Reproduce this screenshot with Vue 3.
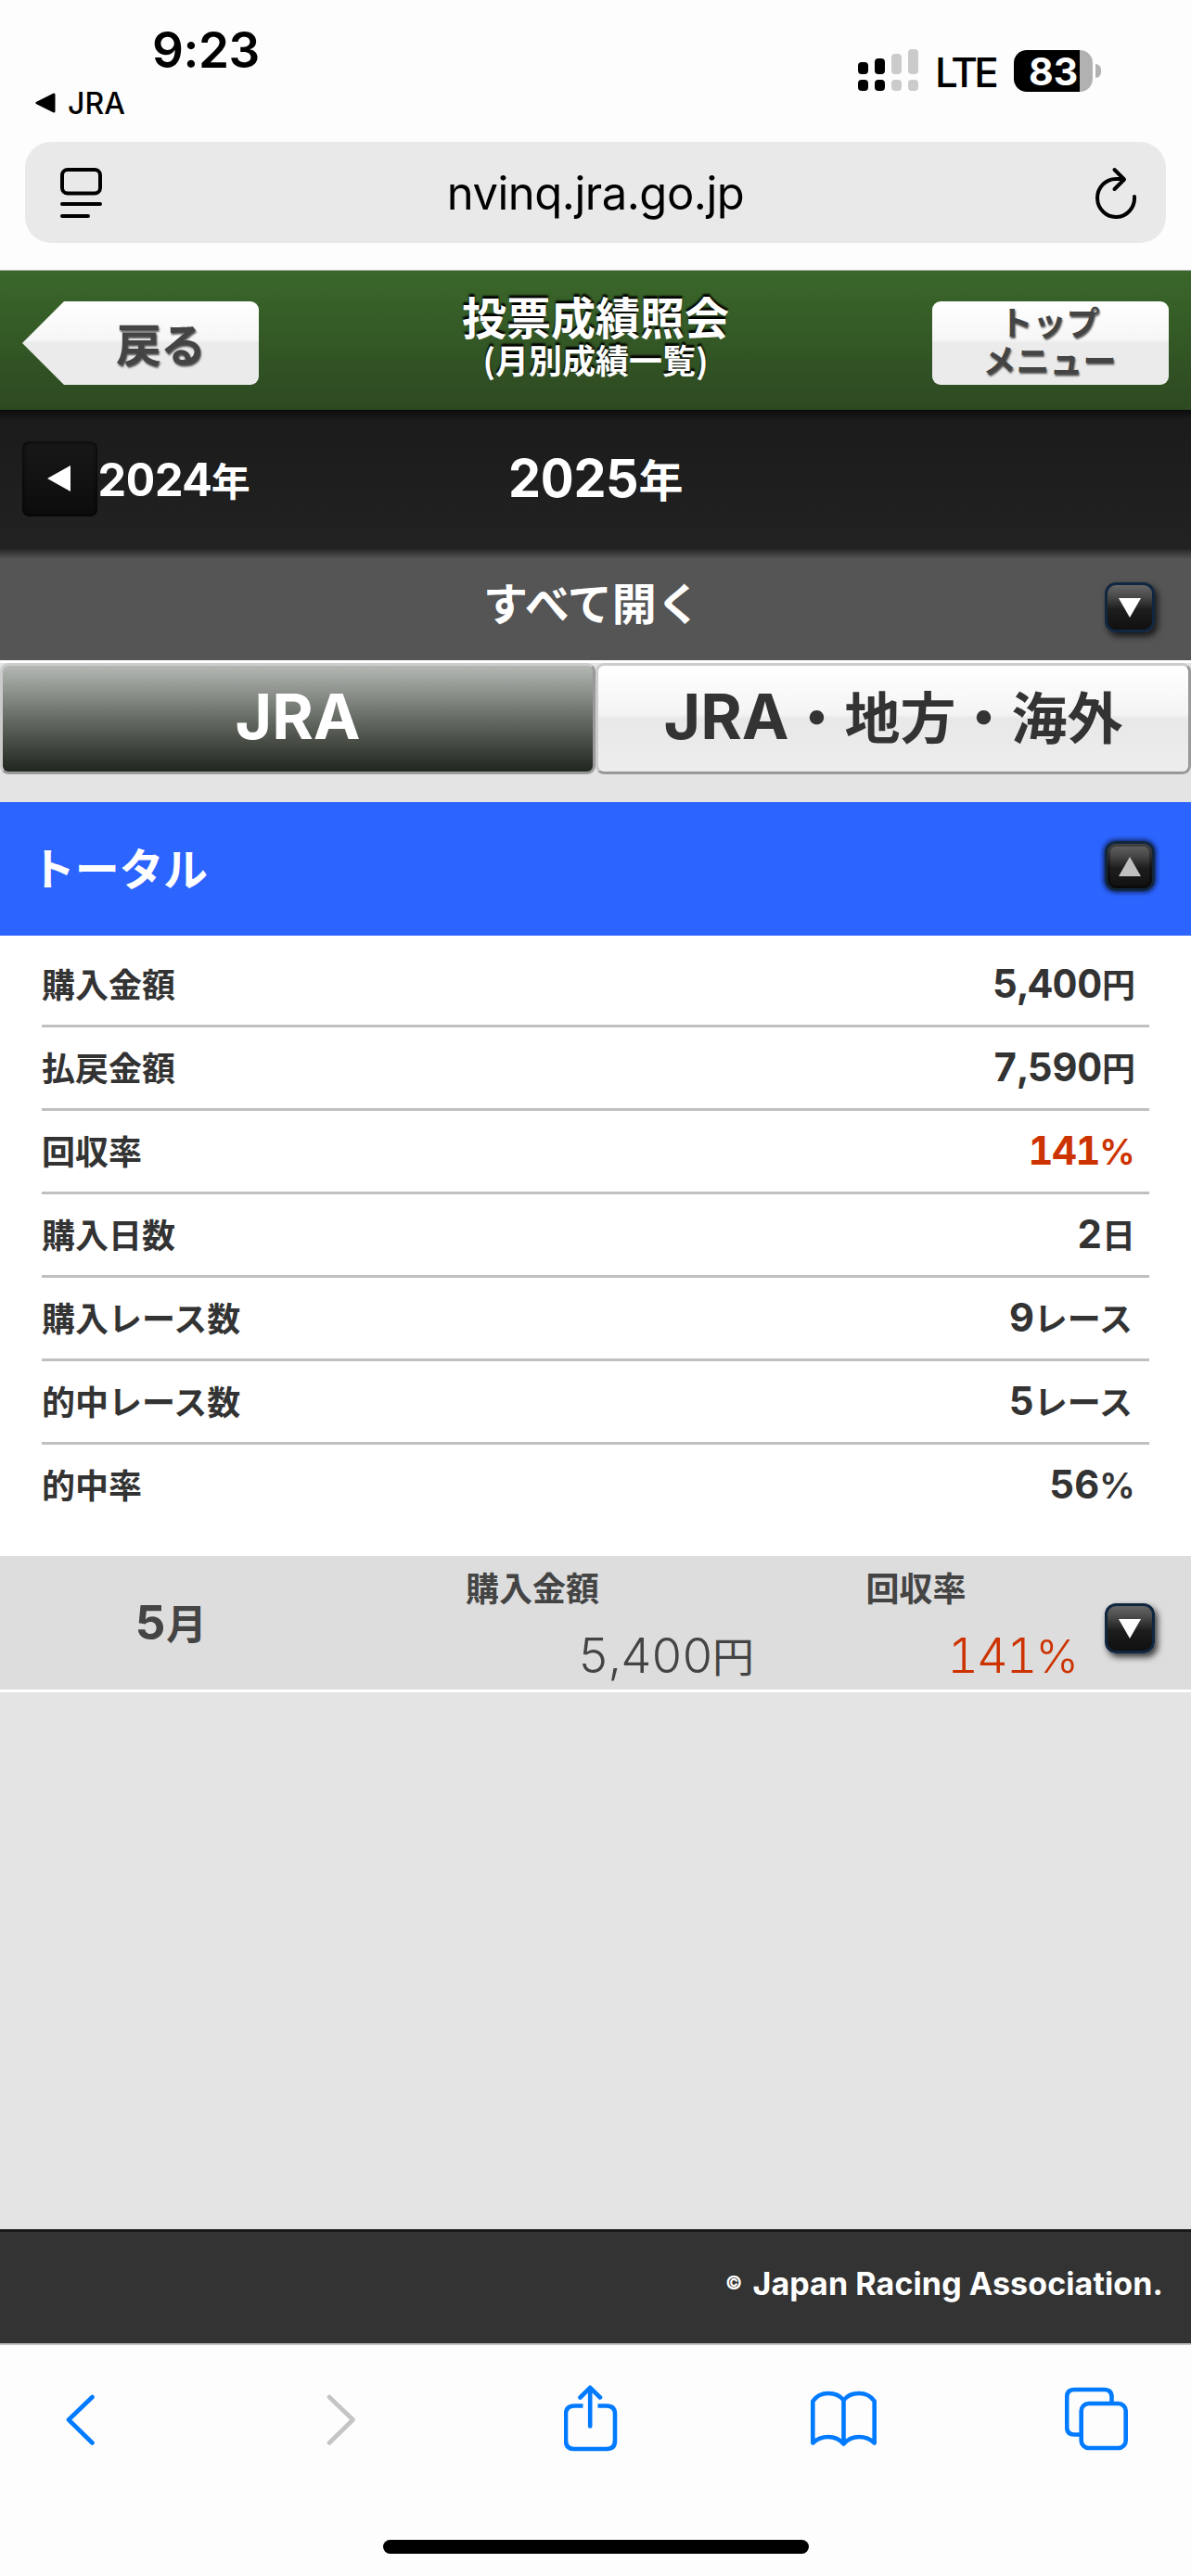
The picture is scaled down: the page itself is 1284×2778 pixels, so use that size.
<script setup>
const rows = [
  { label: '購入金額', num: '5,400', unit: '円' },
  { label: '払戻金額', num: '7,590', unit: '円' },
  { label: '回収率', num: '141', pct: true, red: true },
  { label: '購入日数', num: '2', unit: '日' },
  { label: '購入レース数', num: '9', unit: 'レース', kana: true },
  { label: '的中レース数', num: '5', unit: 'レース', kana: true },
  { label: '的中率', num: '56', pct: true },
]
</script>

<template>
  <div class="screen">
    <header class="browser-top">
      <div class="status">
        <div class="status-left">
          <div class="time">9:23</div>
          <div class="return">
            <svg width="22" height="22" viewBox="0 0 22 22"><path d="M20 2v18L2 11z" stroke="#000" stroke-width="3" stroke-linejoin="round" /></svg>
            <span>JRA</span>
          </div>
        </div>
        <div class="status-right">
          <svg width="66" height="46" viewBox="0 0 66 46">
            <g fill="#000">
              <rect x="0" y="14" width="11" height="13" rx="4" /><rect x="0" y="33" width="11" height="12" rx="4" />
              <rect x="18" y="10" width="11" height="17" rx="4" /><rect x="18" y="33" width="11" height="12" rx="4" />
            </g>
            <g fill="#cbcbcb">
              <rect x="36" y="5" width="11" height="22" rx="4" /><rect x="36" y="33" width="11" height="12" rx="4" />
              <rect x="54" y="0" width="11" height="27" rx="4" /><rect x="54" y="33" width="11" height="12" rx="4" />
            </g>
          </svg>
          <span class="lte">LTE</span>
          <div class="battery"><span>83</span></div>
          <div class="nub"></div>
        </div>
      </div>
      <div class="urlbar">
        <svg width="46" height="54" viewBox="0 0 46 54" fill="none" stroke="#000" stroke-width="4" stroke-linecap="round">
          <rect x="2" y="2" width="41" height="25.5" rx="6" /><path d="M2 39h41M2 52h28" />
        </svg>
        <span class="url">nvinq.jra.go.jp</span>
        <svg class="reload" width="48" height="56" viewBox="0 0 48 56" fill="none" stroke="#000" stroke-width="4" stroke-linecap="round" stroke-linejoin="round">
          <path d="M44 32A20 20.5 0 1 1 24 13h8" /><path d="M22.500 3 33 13.500 22.500 24" />
        </svg>
      </div>
    </header>

    <div class="titlebar">
      <div class="back"><span>戻る</span></div>
      <div class="heading"><h1>投票成績照会</h1><small>(月別成績一覧)</small></div>
      <div class="topmenu"><span>トップ</span><span>メニュー</span></div>
    </div>

    <div class="years">
      <div class="prev">
        <div class="prev-btn"><svg width="26" height="28" viewBox="0 0 26 28"><path d="M25 0v28L0 14z" fill="#fff" /></svg></div>
        <span><span class="n">2024</span>年</span>
      </div>
      <div class="current"><span class="n">2025</span>年</div>
      <div></div>
    </div>

    <div class="openall">
      <span>すべて開く</span>
      <div class="toggle"><svg width="24" height="21" viewBox="0 0 24 21"><path d="M0 0h24L12 21z" fill="#fff" /></svg></div>
    </div>

    <div class="tabs">
      <div class="tab on"><span class="n">JRA</span></div>
      <div class="tab"><span class="n">JRA</span>・地方・海外</div>
    </div>

    <div class="total">
      <span>トータル</span>
      <div class="toggle open"><svg width="24" height="21" viewBox="0 0 24 21"><path d="M0 21h24L12 0z" fill="#c0c0c0" /></svg></div>
    </div>

    <div class="rows">
      <div v-for="r in rows" :key="r.label" class="row">
        <span>{{ r.label }}</span>
        <span class="val" :class="{ red: r.red, kana: r.kana }"><span class="n">{{ r.num }}</span><span v-if="r.pct" class="pct">%</span>{{ r.unit }}</span>
      </div>
    </div>

    <div class="month">
      <div class="name"><span class="n">5</span>月</div>
      <div class="cell buy"><h2>購入金額</h2><p><span class="n">5,400</span>円</p></div>
      <div class="cell rate"><h2>回収率</h2><p class="red"><span class="n">141</span><span class="pct">%</span></p></div>
      <div class="toggle"><svg width="24" height="21" viewBox="0 0 24 21"><path d="M0 0h24L12 21z" fill="#fff" /></svg></div>
    </div>

    <div class="blank"></div>

    <footer class="copy"><span class="mark">©</span><span>Japan Racing Association.</span></footer>

    <nav class="toolbar">
      <div class="tools">
        <svg width="32" height="72" viewBox="0 0 32 72"><path d="M28.500 13 3 37.500 28.500 62.500" /></svg>
        <svg class="off" width="32" height="72" viewBox="0 0 32 72"><path d="M3 13 28.500 37.500 3 62.500" /></svg>
        <svg width="58" height="74" viewBox="0 0 58 74">
          <path class="butt" d="M20.500 22.500H11q-9 0-9 9V60q0 9 9 9h35q9 0 9-9V31.500q0-9-9-9H36.500" />
          <path d="M28.200 4v40.500M17.500 13.500 28.200 2.800 39 13.500" />
        </svg>
        <svg width="72" height="72" viewBox="0 0 72 72">
          <path d="M35.500 16.500Q30 9 19 9 8 9 2.300 17.500V62.500Q9 56 19 56 29 56 35.500 63.500 42 56 52 56 62 56 68.700 62.500V17.500Q63 9 52 9 41 9 35.500 16.500V63" />
        </svg>
        <svg width="70" height="72" viewBox="0 0 70 72">
          <path class="butt" d="M50.500 19.500V13q0-8-8-8H10.200q-8 0-8 8V45.500q0 8 8 8h7" />
          <rect x="17.700" y="20" width="48" height="48" rx="8" />
        </svg>
      </div>
      <div class="home"></div>
    </nav>
  </div>
</template>

<style>
body { margin: 0; }
</style>

<style scoped>
* { box-sizing: border-box; }
.screen {
  width: 1284px; height: 2778px; display: flex; flex-direction: column; overflow: hidden;
  background: #fdfdfd; color: #333; font-family: "Noto Sans CJK JP", "Inter", sans-serif;
}
svg { display: block; flex: none; }
.n { font-family: "Inter", sans-serif; font-size: 1.16em; line-height: 0; font-feature-settings: "tnum"; }

.browser-top { height: 292px; background: #fdfdfd; border-bottom: 1px solid #aaa; font-family: "Inter", sans-serif; color: #000; }
.status { height: 153px; display: flex; justify-content: space-between; }
.status-left { padding: 24px 0 0 38px; }
.time { font-size: 53px; font-weight: 600; line-height: 60px; padding-left: 126px; letter-spacing: -0.4px; }
.return { display: flex; align-items: center; gap: 13px; height: 40px; margin-top: 7px; font-size: 32px; font-weight: 500; }
.status-right { display: flex; align-items: center; height: 46px; margin: 53px 97px 0 0; }
.lte { font-size: 44px; font-weight: 500; line-height: 46px; margin: 3px 0 0 17px; width: 85px; letter-spacing: -3.6px; }
.battery { width: 85px; height: 45px; border-radius: 14px; background: linear-gradient(90deg, #000 71px, #b1b1b1 71px); color: #fff; font-size: 41px; line-height: 46px; font-weight: 700; padding-left: 16px; }
.nub { width: 6px; height: 15px; margin-left: 3px; border-radius: 0 7px 7px 0; background: #b1b1b1; }
.urlbar { height: 109px; margin: 0 27px; border-radius: 28px; background: #e9e9e9; display: flex; align-items: center; justify-content: space-between; padding: 0 30px 0 38px; }
.url { font-size: 49px; line-height: 60px; letter-spacing: -0.5px; padding: 3px 6px 0 0; }

.titlebar {
  height: 150px; flex: none; display: flex; justify-content: space-between; padding: 33px 24px 0;
  background: linear-gradient(#3a672a, #2d4921);
}
.back, .topmenu { height: 90px; width: 255px; background: linear-gradient(#fff, #f6f6f6 46%, #ebebeb 50%, #ebebeb); color: #444; font-weight: 700; text-shadow: 1px 2px 2px rgba(0, 0, 0, .65); }
.back { border-radius: 0 9px 9px 0; clip-path: polygon(0 50%, 45px 0, 100% 0, 100% 100%, 45px 100%); font-size: 49px; line-height: 88px; padding: 0 0 0 101px; letter-spacing: -1px; }
.topmenu { border-radius: 9px; font-size: 36px; line-height: 41px; display: flex; flex-direction: column; align-items: center; padding: 1px 2px 0 0; }
.heading { display: flex; flex-direction: column; margin-top: -20px; font-size: 48px; color: #fff; text-align: center; text-shadow: 0 -3px 2px #000; font-weight: 700; }
h1 { margin: 0; font-size: 48px; line-height: 71px; }
small { font-size: 36px; line-height: 54px; margin-top: -16px; }

.years {
  height: 150px; flex: none; display: grid; grid-template-columns: 400px 484px 400px; align-items: center; color: #fff; font-weight: 700;
  background: linear-gradient(#0c0c0c, #1b1b1b 10px, #222);
}
.years .n { letter-spacing: -0.8px; }
.prev { display: flex; align-items: center; padding-left: 24px; font-size: 42px; line-height: 84px; }
.prev-btn { width: 81px; height: 81px; margin-top: -2px; border-radius: 8px; background: linear-gradient(#181818, #0c0c0c); display: flex; align-items: center; padding-left: 27px; box-shadow: inset 0 0 5px #000; }
.current { font-size: 48px; text-align: center; padding-bottom: 4px; }

.openall {
  height: 120px; flex: none; display: flex; align-items: flex-start; color: #fff; font-weight: 700; font-size: 48px; line-height: 112px;
  background: linear-gradient(#262626, #555 11px);
}
.openall > span { flex: 1; padding-left: 521px; }
.toggle {
  width: 54px; height: 54px; flex: none; border: 3px solid #112740; border-radius: 12px; display: flex; align-items: center; justify-content: center;
  background: linear-gradient(#666, #4a4a4a 25%, #1d1d1d 55%, #101010); box-shadow: 3px 4px 7px rgba(0, 0, 0, .75);
}
.openall .toggle { margin: 36px 39px 0 0; }
.toggle.open { box-shadow: 0 0 4px 2px rgba(0, 0, 0, .55), inset 0 0 0 3px rgba(0, 0, 0, .35); }

.tabs { height: 153px; flex: none; display: flex; background: #e4e4e4; border-top: 3px solid #fff; font-size: 60px; font-weight: 700; }
.tab {
  width: 642px; height: 120px; border: 3px solid; border-color: #ccc #999 #999 #ccc; border-radius: 9px; text-align: center; line-height: 106px;
  background: linear-gradient(#fff, #f4f4f4 46%, #e8e8e8 50%, #ededed);
}
.tab.on { color: #fff; background: linear-gradient(#b3b8b4, #666b64 50%, #20261e); }
.tab .n { font-size: 68px; }

.total { height: 144px; flex: none; background: #2c64ff; display: flex; align-items: center; justify-content: space-between; padding: 0 39px 6px 33px; color: #fff; font-size: 48px; font-weight: 700; letter-spacing: -0.3px; }

.rows { height: 669px; flex: none; background: #fff; padding: 9px 45px 0; }
.row { height: 90px; border-bottom: 3px solid #c0c0c0; display: flex; justify-content: space-between; padding-right: 15px; font-size: 36px; line-height: 84px; font-weight: 700; }
.row:last-child { border: 0; }
.row .n { letter-spacing: -0.3px; }
.row .pct { font-weight: 600; font-size: 1.08em; }
.kana { padding-right: 3px; }
.pct { font-family: "Inter", sans-serif; font-size: 1.1em; line-height: 0; }
.red { color: #c30; }
.red .n { letter-spacing: -1.5px; }

.month { height: 147px; flex: none; background: #ddd; border-bottom: 3px solid #fff; display: flex; color: #444; }
.name { width: 369px; text-align: center; font-size: 44px; line-height: 142px; font-weight: 700; }
.cell h2 { margin: 0; font-size: 36px; line-height: 66px; }
.cell p { margin: 0; font-size: 45px; line-height: 82px; text-align: right; font-weight: 400; }
.cell p .n, .cell p .pct { font-weight: 350; }
.cell p .n { letter-spacing: -0.8px; }
.cell p.red .n { letter-spacing: -2px; }
.buy { width: 444px; text-align: center; }
.buy h2 { margin-right: 34px; }
.rate { width: 350px; text-align: center; }
.rate h2 { margin-right: 1px; }
.month .toggle { margin: 51px 0 0 28px; }

.blank { flex: none; height: 579px; background: #e4e4e4; }
.copy { height: 123px; flex: none; border-top: 3px solid #1a1a1a; background: #333; color: #fff; display: flex; align-items: center; justify-content: flex-end; gap: 11px; padding: 0 30px 10px 0; font: 700 34px "Inter", sans-serif; letter-spacing: 0.1px; }
.mark { font-size: 20px; }

.toolbar { flex: 1; border-top: 2px solid #c4c4c4; background: #fdfdfd; }
.tools { display: grid; grid-template-columns: 281px 256px 266px 274px 70px; padding: 43px 0 0 71px; height: 210px; }
.tools svg { fill: none; stroke: #007aff; stroke-width: 4.600; stroke-linecap: round; stroke-linejoin: round; }
.tools svg.off { stroke: #c4c4c4; }
.tools .butt { stroke-linecap: butt; }
.home { width: 459px; height: 15px; margin: 0 auto; border-radius: 8px; background: #000; }
</style>
